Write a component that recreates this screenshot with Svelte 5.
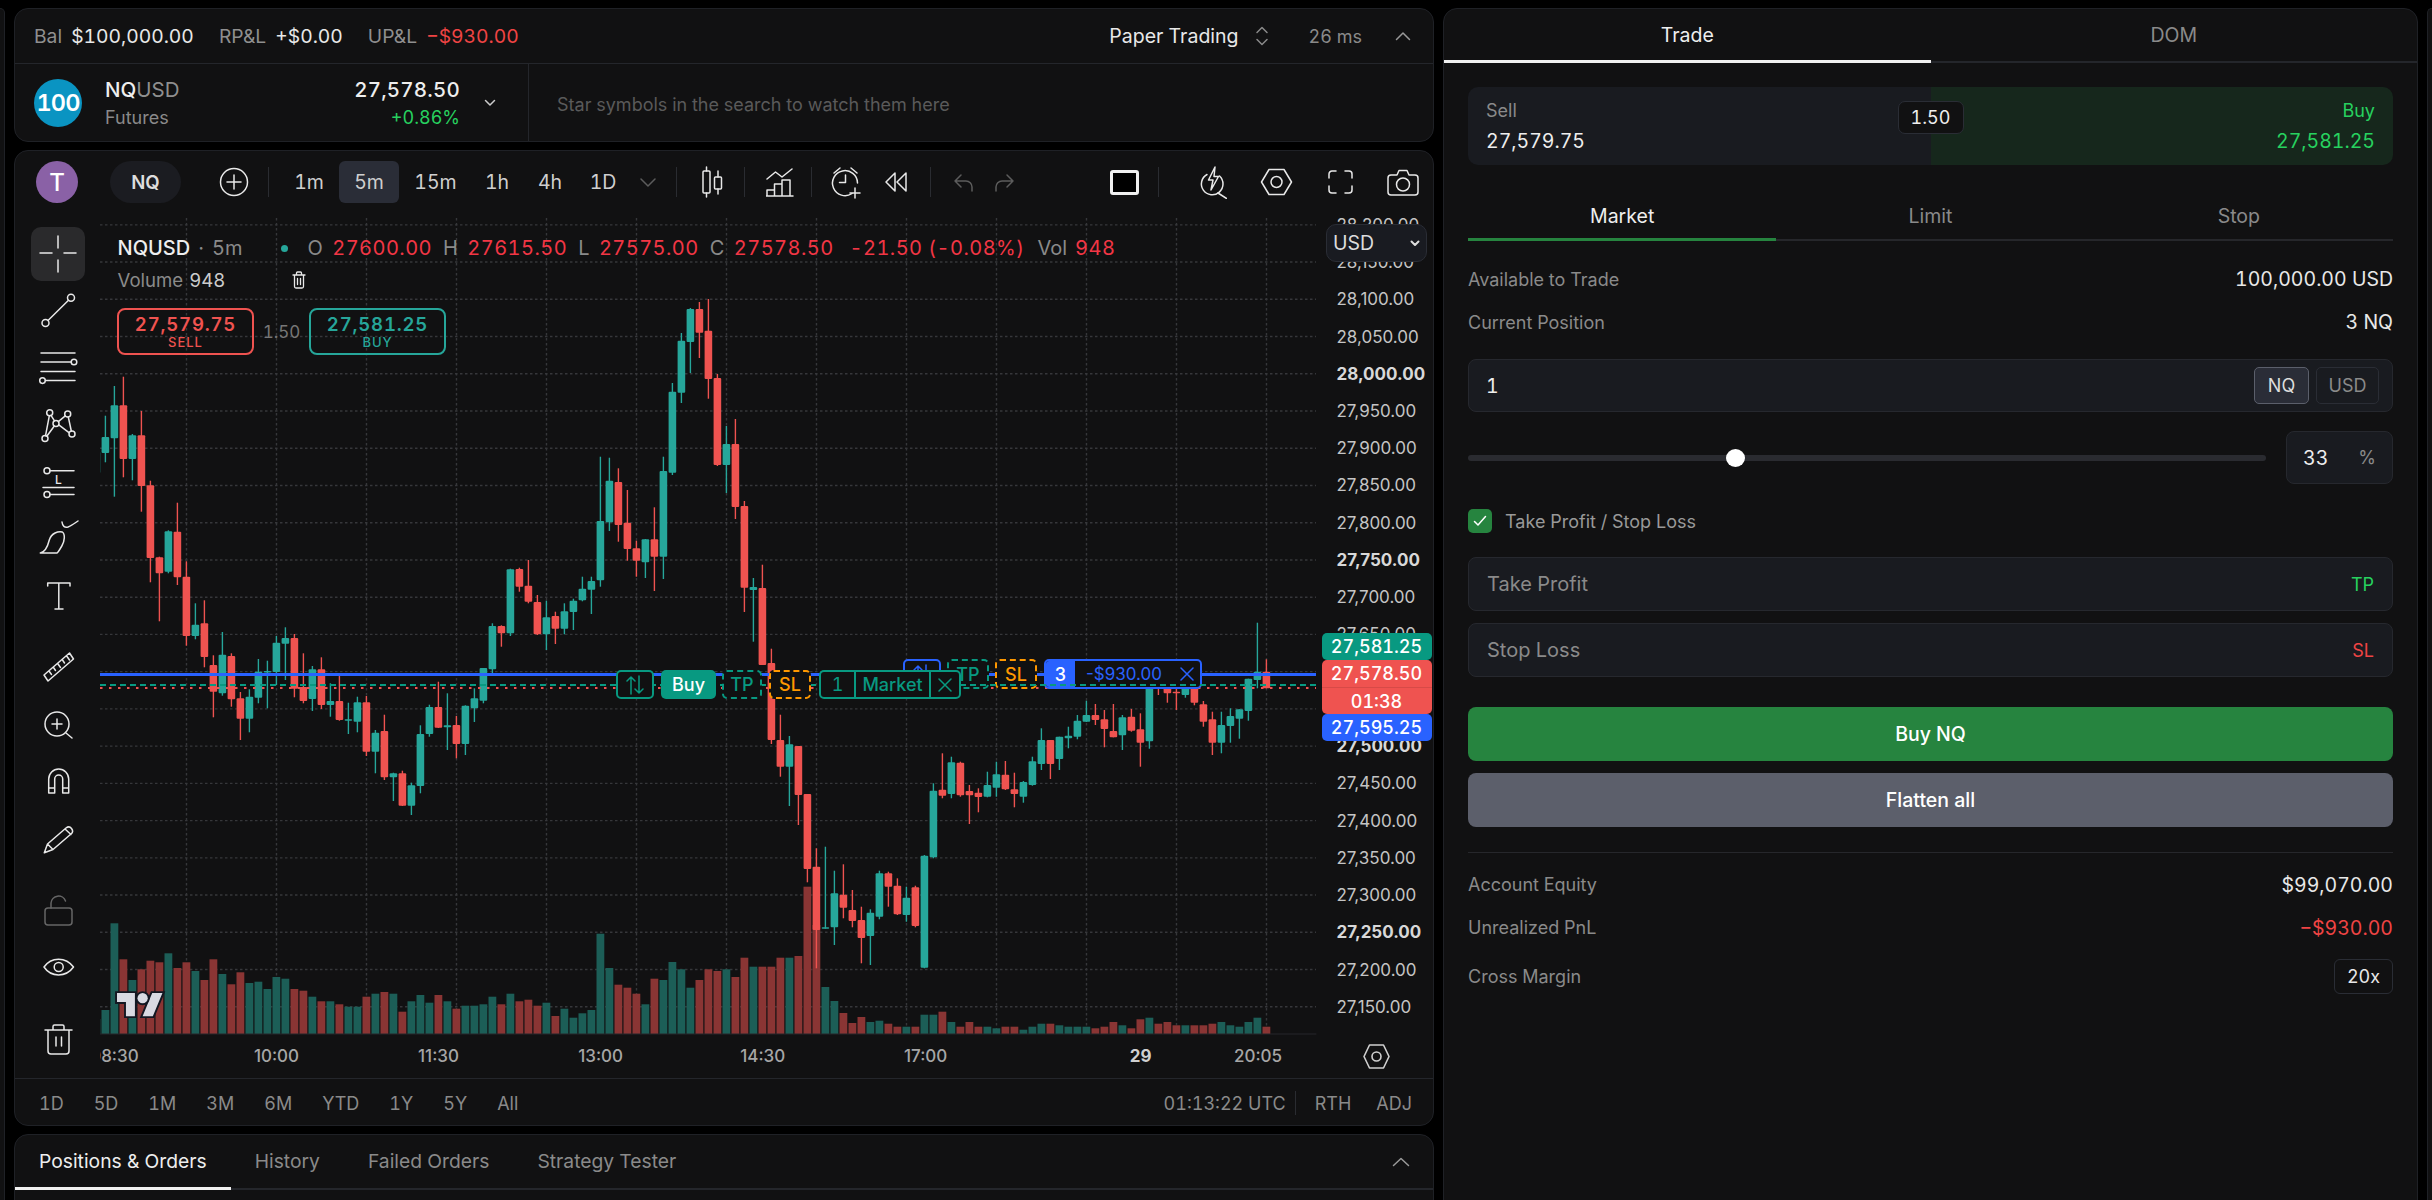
<script>
  // [up, wickTop, bodyTop, bodyBottom, wickBottom] in chart pixels; index 0 is the clipped candle at the left edge
  const candles = [
    [1,452,452,473,473],[1,415.7,437,453,462.3],[1,386,405.3,438.3,496.7],[0,376.7,405.3,459,477.3],[1,434,435.3,459,480.3],[0,411,435.3,486,511.7],
    [0,480.7,485.3,558,582.3],[0,556.7,557.3,573.3,621.3],[1,530.3,531.3,571.7,573.3],[0,502.7,531.7,577.3,585],[0,561.3,576.7,636,645.7],
    [1,603.3,624.7,636,639.3],[0,600.3,623.3,657,667.3],[0,655.3,665,691.7,717.3],[1,632,654.7,693.3,695.7],[0,653.3,656,699.3,706.7],
    [0,692,698.3,718.7,740],[1,689.3,696.7,718.7,732.3],[1,659,671.7,697.7,703.3],[1,660.7,671,672,708.3],[1,636,642.7,672,685],
    [1,627.3,638,643.7,680],[0,634,638,688.7,697.3],[0,653.3,687,701,703.3],[1,666,669.3,699,711],[0,657.3,669.3,705,709],
    [1,683.3,701,705,716.7],[0,676,701,720,720.7],[1,702.7,719.3,720.3,734],[1,696.7,702.3,721.7,732.3],[0,696,702.3,751.7,756],
    [1,730,732.7,751.7,773.3],[0,714.7,731,777.3,780],[1,772.7,773.3,777.3,801],[0,770.7,773.3,805.7,806],[1,782.7,785.3,805.7,815],
    [1,725.3,734,786,793.3],[1,704.7,707,734,736.7],[0,681.7,707,727.7,728],[1,693.3,725.3,727.3,750],[0,716,725,744,758.3],
    [1,705.3,705.7,744,755],[1,688.3,698.3,708.3,722],[1,668,668,700.7,703.3],[1,623.3,626,669.3,673.3],[0,625.3,626,633.3,646.7],
    [1,568.7,569.3,633.3,636],[0,567.7,569,586.7,591.7],[0,560,585.7,601.7,603.3],[0,595,602,634.3,635],[1,600.7,617.3,634.3,650],
    [0,611.7,616,628.7,644],[1,603.3,611.3,628.7,634.3],[1,598.7,600.7,612,630],[1,576.7,588.7,600.3,601.3],[1,576.7,581,589.7,614],
    [1,456.7,521,580.3,586.7],[1,457.7,480.7,522.3,531],[0,468.3,482,525,541.7],[0,490,522.7,549,560.7],[0,540.7,548.3,560.7,576.7],
    [1,539,539.3,562.3,578],[0,507.3,539.3,556.7,591],[1,456.7,471,556.7,579],[1,383,391.7,472.7,475],[1,333,340.7,392.7,403],
    [1,308,309,342,373],[0,302,309,332.7,358],[0,299,330.7,379,398.7],[0,374,378,465,466],[1,426,444,465,493],
    [0,419,444,507,519],[0,501,506,587.7,612],[1,578,587,590,641.7],[0,564.7,588,665,665],[0,648.7,663,740,744],
    [0,714.7,740,766.7,776.7],[1,736,744.3,766.7,806],[0,746,746,795,825],[0,794,794,869,882.3],[0,848.3,866.7,930,968.3],
    [1,846.7,927.3,928.7,928.7],[1,870.7,893.3,927.3,945],[0,864.3,894.7,907.7,918.3],[0,890,910,921,927.3],[0,906.7,920,938,963.3],
    [1,909.3,912.7,936,965],[1,870.7,873.3,916.7,919.3],[0,871.7,873.3,886.7,906.7],[0,878.3,885.7,914.3,915],[1,886.7,897.7,915,921.7],
    [0,885.7,887.3,926,927.3],[1,855,855.7,967.7,968.3],[1,783.3,790.7,857.3,858.3],[0,753.3,789.7,795.7,798.3],[1,756.7,762.3,794,798.3],
    [0,761.7,762.7,795.3,796.7],[0,785,791,795.3,824],[0,788.3,792.7,797,812.3],[1,771.7,785,796.7,797.3],[1,761.7,774.3,787.7,796.7],
    [0,761,774.7,789.3,790],[0,772.7,789.3,794,807.3],[1,781,782,796.7,802.7],[1,756.7,761.3,785,785.7],[1,728.3,740,764,770],
    [0,740,740,764,779],[1,736.7,736.7,759,770],[1,726.7,735.7,738.3,748.3],[1,715,720.7,736.7,739.3],[1,700.7,715,721.7,722],
    [0,704,715,720,725],[0,710,719.3,729,747.3],[0,704,731,737.3,737.3],[1,715,717.3,735.3,750],[0,709,716.7,730.7,731.7],
    [0,713.3,729.3,742.7,766.7],[1,676.7,680,741.3,748.7],[0,660,676.7,688.3,695],[0,683.3,688.3,693.3,702.7],[0,686.7,691.7,693.3,710],
    [1,683.3,688.3,695,697.7],[0,683.3,688.3,702.7,705.3],[0,701,704.3,721.7,726.7],[0,711.7,719.3,742.7,755],[1,711.7,725,742.7,753.3],
    [1,708.3,716,726,742.7],[1,709.3,709.3,718.7,738.7],[1,678.7,678.7,711,720.7],[1,622.7,671.7,680,688.3],[0,659.3,671.7,688.3,688.3]
  ];

  // top of each volume bar, same order as candles
  const volumes = [
    1019,1010,923.3,959.3,980,969.3,960.7,962.3,953.3,968,962.3,971,980,959.3,974,984.3,972.3,983,981.7,989,977,978.7,989,990.7,
    996.7,1001.3,1001.3,1004.3,1006.7,1006.7,996.7,993.7,992,993.7,1011.7,1001.3,995,1002.7,995,1001.3,1008.7,1005.7,1005.7,1004.3,
    996.7,1004.3,993.7,1001.3,999.7,1005.7,1002.7,1016,1008.7,1017.7,1013.3,1010,933.7,968,984.7,987.7,993.7,1004.3,978.7,980,962,
    969.3,987.7,980,969.3,971,969.3,977,957.7,966.7,966.7,966.7,957.7,957.7,956,886.7,925,987,1001,1013,1023,1017,1022,1020.7,1023.7,
    1026.7,1026.7,1026.7,1014.7,1014.7,1011.7,1022,1026.7,1022,1026.7,1026.7,1028.3,1026.7,1026.7,1029.7,1026.7,1023.7,1023.7,1025.3,
    1026.7,1026.7,1026.7,1028.3,1026.7,1022,1025.3,1028.3,1019.3,1017.7,1023.7,1022,1025.3,1025.3,1025.3,1025.3,1023.7,1022,1025.3,
    1026.7,1022,1017.7,1026.7
  ];

  const candleX = (i) => 96.4 + 9 * i;

  const gridX = [];
  for (let x = 186.5; x < 1300; x += 90) gridX.push(x);

  const prices = [];
  for (let p = 28200; p >= 27150; p -= 50) {
    prices.push({
      y: 299.3 + (28100 - p) * 0.7447,
      text: p.toLocaleString("en-US") + ".00",
      bold: p % 250 === 0
    });
  }

  const times = [
    { x: 114.4, t: "08:30" },
    { x: 276.5, t: "10:00" },
    { x: 438.5, t: "11:30" },
    { x: 600.6, t: "13:00" },
    { x: 762.7, t: "14:30" },
    { x: 925.6, t: "17:00" },
    { x: 1140.6, t: "29", bold: true },
    { x: 1258, t: "20:05" }
  ];

  const frames = [
    { t: "1m", w: 54 },
    { t: "5m", w: 60 },
    { t: "15m", w: 67 },
    { t: "1h", w: 50 },
    { t: "4h", w: 50 },
    { t: "1D", w: 50 }
  ];
  const ranges = ["1D", "5D", "1M", "3M", "6M", "YTD", "1Y", "5Y", "All"];
  const bottomTabs = ["Positions & Orders", "History", "Failed Orders", "Strategy Tester"];
</script>

<div class="page">
  <div class="sliver left"></div>

  <div class="main">
    <section class="panel top">
      <div class="stats">
        <span class="label">Bal</span><span class="val">$100,000.00</span>
        <span class="label gap">RP&amp;L</span><span class="val">+$0.00</span>
        <span class="label gap">UP&amp;L</span><span class="val neg">−$930.00</span>
        <span class="mode">Paper Trading</span>
        <svg class="updown" width="14" height="20" viewBox="0 0 14 20"><path d="M2 6.500 7 1.500l5 5M2 13.500l5 5 5-5" /></svg>
        <span class="ping">26 ms</span>
        <svg class="collapse" width="16" height="10" viewBox="0 0 16 10"><path d="M1.500 8.500 8 2l6.500 6.500" /></svg>
      </div>
      <div class="ticker">
        <div class="symbol">
          <div class="logo">100</div>
          <div class="names">
            <div class="sym">NQ<span>USD</span></div>
            <div class="kind">Futures</div>
          </div>
          <div class="quote">
            <div class="last">27,578.50</div>
            <div class="chg">+0.86%</div>
          </div>
          <svg class="caret" width="12" height="8" viewBox="0 0 12 8"><path d="M1.500 1.500 6 6l4.500-4.500" /></svg>
        </div>
        <div class="hint">Star symbols in the search to watch them here</div>
      </div>
    </section>

    <section class="panel chart">
      <div class="toolbar">
        <div class="avatar">T</div>
        <div class="pill">NQ</div>
        <svg class="ic plus" width="30" height="30" viewBox="0 0 30 30"><circle cx="15" cy="15" r="13.500" /><path d="M15 8v14M8 15h14" /></svg>
        <div class="sep s20"></div>
        <div class="frames">
          {#each frames as f}
            <div class="frame" class:on={f.t === "5m"} style="width: {f.w}px">{f.t}</div>
          {/each}
        </div>
        <svg class="ic dim more" width="20" height="10" viewBox="0 0 20 10"><path d="M3 2l7 7 7-7" /></svg>
        <div class="sep s18"></div>
        <svg class="ic m24" width="30" height="32" viewBox="0 0 30 32">
          <path d="M5.500 1v4M5.500 27v4M17 5v6M17 23v5" />
          <rect x="2" y="5" width="7" height="22" rx="1" />
          <rect x="13.500" y="11" width="7" height="12" rx="1" />
        </svg>
        <div class="sep m13"></div>
        <svg class="ic m21" width="28" height="30" viewBox="0 0 28 30">
          <path d="M1 12l8.500-7 6.500 5 10-8" />
          <path d="M1 29V23h7.500v6M8.500 29V17H16v12M16 29V13h8v16M0 29h27" />
        </svg>
        <div class="sep m17"></div>
        <svg class="ic m18" width="32" height="34" viewBox="0 0 32 34">
          <path d="M22 28.500A12.500 12.500 0 1 1 27.500 18" />
          <path d="M15.500 10v7.500H9.500M4 8l6-5M27 8l-6-5M25 23v10M20 28h10" />
        </svg>
        <svg class="ic m22" width="24" height="20" viewBox="0 0 24 20"><path d="M11 1 2 10l9 9zM22 1l-9 9 9 9z" /></svg>
        <div class="sep m22"></div>
        <svg class="ic dim m22" width="20" height="20" viewBox="0 0 20 20"><path d="M8 3 2 9l6 6M2 9h11a6 6 0 0 1 6 6v4" /></svg>
        <svg class="ic dim m22" width="20" height="20" viewBox="0 0 20 20"><path d="M12 3l6 6-6 6M18 9H7a6 6 0 0 0-6 6v4" /></svg>

        <div class="right-tools">
          <div class="square"></div>
          <div class="sep m19"></div>
          <svg class="ic m40" width="28" height="33" viewBox="0 0 28 33">
            <path d="M8 8.500A10.800 10.800 0 1 0 20.500 10" />
            <path d="M16 1 9.500 14H14l-2 10 7.500-13.500H15zM19 27l8.500 5.500" />
          </svg>
          <svg class="ic m33" width="33" height="28" viewBox="0 0 33 28">
            <path d="M9 1.500h15l7.500 12.500L24 26.500H9L1.500 14z" /><circle cx="16.500" cy="14" r="5.500" />
          </svg>
          <svg class="ic m35" width="25" height="24" viewBox="0 0 25 24">
            <path d="M1 8V4a3 3 0 0 1 3-3h4M17 1h4a3 3 0 0 1 3 3v4M24 16v4a3 3 0 0 1-3 3h-4M8 23H4a3 3 0 0 1-3-3v-4" />
          </svg>
          <svg class="ic m34" width="32" height="27" viewBox="0 0 32 27">
            <path d="M4 6h6l2-4.500h8L22 6h6a3 3 0 0 1 3 3v14a3 3 0 0 1-3 3H4a3 3 0 0 1-3-3V9a3 3 0 0 1 3-3z" /><circle cx="16" cy="15.500" r="6.500" />
          </svg>
        </div>
      </div>

      <div class="body">
        <div class="tools">
          <div class="tool active">
            <svg width="40" height="40" viewBox="0 0 40 40"><path d="M20 2v12M20 26v12M2 19h12M26 19h12" /></svg>
          </div>
          <div class="tool">
            <svg width="40" height="40" viewBox="0 0 40 40"><circle cx="7.500" cy="32" r="3.500" /><circle cx="33" cy="6.700" r="3.500" /><path d="M10 29.500 30.500 9.300" /></svg>
          </div>
          <div class="tool">
            <svg width="40" height="40" viewBox="0 0 40 40"><circle cx="36" cy="14" r="2.800" /><circle cx="4.500" cy="32.600" r="2.800" /><path d="M3 5h34M3 14h30M3 23.600h34M7.500 32.600H37" /></svg>
          </div>
          <div class="tool">
            <svg width="40" height="40" viewBox="0 0 40 40">
              <circle cx="11.700" cy="7.700" r="3" /><circle cx="29.700" cy="9" r="3" /><circle cx="18" cy="18.500" r="3" /><circle cx="7" cy="33.600" r="3" /><circle cx="34" cy="29" r="3" />
              <path d="M7.500 30.800l3.800-20M13 10.400l3.500 5.500M20.300 16.600l7-5.800M30.300 12l3 14M31.300 27.800 20.800 19.800M16.300 21 8.800 31.300" />
            </svg>
          </div>
          <div class="tool">
            <svg width="40" height="40" viewBox="0 0 40 40">
              <circle cx="9" cy="8.700" r="3" /><circle cx="9" cy="32.600" r="3" />
              <path d="M12 8.700h24M5 25.500h31M12 32.600h24" />
              <text x="17" y="21.500" class="mini">L</text>
            </svg>
          </div>
          <div class="tool">
            <svg width="40" height="40" viewBox="0 0 40 40">
              <path d="M2.300 34c5-1 7.500-7 9-13 2-7 9-9 13-8 3 2 2.500 9-.5 14-2 3.500-4 7-5 7z" />
              <path d="M24 3c.500 4 2.500 6 6 5 3-1 7-4 10-6" />
            </svg>
          </div>
          <div class="tool">
            <svg width="40" height="40" viewBox="0 0 40 40"><path d="M9.700 10V7H32v3M20.800 7v26M17 33h8" /></svg>
          </div>

          <div class="tool mt14">
            <svg width="40" height="40" viewBox="0 0 40 40"><path d="M6 28 31.500 6l4 6L10 34zM11 24l2.500 3.500M15.500 20.500l2 3M20 17l2.500 3.500M24.500 13l2 3M29 9.500l2.500 3.500" /></svg>
          </div>
          <div class="tool">
            <svg width="40" height="40" viewBox="0 0 40 40"><circle cx="19" cy="20" r="12" /><path d="M28 29l6 5M19 15v10M14 20h10" /></svg>
          </div>
          <div class="tool">
            <svg width="40" height="40" viewBox="0 0 40 40"><path d="M10.700 32V18a10 10 0 0 1 20 0v14H24.700V18a4 4 0 0 0-8 0v14zM10.700 27h6M24.700 27h6" /></svg>
          </div>
          <div class="tool">
            <svg width="40" height="40" viewBox="0 0 40 40"><path d="M6.300 34.700 9.500 26 28 10c2-1.500 4-1.500 5.500.5s1.500 4-.5 5.500L15 31.500zM9.500 26l5.500 5.500M27 11l6 5.500" /></svg>
          </div>

          <div class="tool mt15">
            <svg class="lock" width="40" height="40" viewBox="0 0 40 40"><rect x="7" y="18" width="27" height="17" rx="3" /><path d="M13 18v-5a7.500 7.500 0 0 1 14.500-2" /></svg>
          </div>
          <div class="tool">
            <svg width="40" height="40" viewBox="0 0 40 40"><path d="M6 20c7-10.500 22-10.500 29.500 0-7.500 10.500-22.500 10.500-29.500 0z" /><circle cx="20.700" cy="20" r="4.500" /></svg>
          </div>
          <div class="tool mt14">
            <svg width="40" height="40" viewBox="0 0 40 40"><path d="M7 12h27M15 12V8.500A1.500 1.500 0 0 1 16.500 7h8A1.500 1.500 0 0 1 26 8.500V12M10 12v21a3 3 0 0 0 3 3h15a3 3 0 0 0 3-3V12M18 19v9M23.500 19v9" /></svg>
          </div>
        </div>

        <div class="plot">
          <svg class="canvas" width="1334" height="860" viewBox="100 218 1334 860">
            <defs>
              <clipPath id="pane"><rect x="100" y="218" width="1216" height="860" /></clipPath>
            </defs>

            {#each prices as p}
              <line class="grid" x1="100" x2="1316" y1={p.y} y2={p.y} />
            {/each}
            {#each gridX as x}
              <line class="grid" x1={x} x2={x} y1="218" y2="1034" />
            {/each}

            <g clip-path="url(#pane)">
              {#each volumes as top, i}
                <rect class={candles[i][0] ? "vol-up" : "vol-down"} x={candleX(i) - 3.9} y={top} width="7.800" height={1034 - top} />
              {/each}
              {#each candles as c, i}
                <line class={c[0] ? "wick-up" : "wick-down"} x1={candleX(i)} x2={candleX(i)} y1={c[1]} y2={c[4]} />
                <rect class={c[0] ? "up" : "down"} x={candleX(i) - 3.8} y={c[2]} width="7.600" height={Math.max(c[3] - c[2], 1.500)} rx="1" />
              {/each}
            </g>

            <line class="base" x1="100" x2="1316" y1="1034" y2="1034" />
            <line class="pos-line" x1="100" x2="1316" y1="674.500" y2="674.500" />
            <line class="last-line" x1="100" x2="1316" y1="688" y2="688" />

            {#each prices as p}
              <text class="price" class:bold={p.bold} x="1336.500" y={p.y + 6}>{p.text}</text>
            {/each}
            <g clip-path="url(#pane)">
              {#each times as t}
                <text class="time" class:bold={t.bold} x={t.x} y="1062">{t.t}</text>
              {/each}
            </g>

            <g class="tv" transform="translate(117 988) scale(1.28)">
              <path d="M14 22H7V11H0V4h14v18zM28 22h-8l7.500-18h8L28 22z" /><circle cx="20" cy="8" r="4" />
            </g>

            <g class="gear" transform="translate(1376.500 1056.500)">
              <path d="M-7-11.500H7L12.500 0 7 11.500H-7L-12.500 0z" /><circle r="4.500" />
            </g>
          </svg>

          <div class="legend">
            <div class="line">
              <span class="name">NQUSD</span><span class="mut dotsep">·</span><span class="mut">5m</span>
              <span class="status"></span>
              <span class="mut k">O</span><span class="red">27600.00</span>
              <span class="mut k">H</span><span class="red">27615.50</span>
              <span class="mut k">L</span><span class="red">27575.00</span>
              <span class="mut k">C</span><span class="red">27578.50</span>
              <span class="red chg2">-21.50 (-0.08%)</span>
              <span class="mut vol">Vol</span><span class="red">948</span>
            </div>
            <div class="line second">
              <span class="mut">Volume</span><span class="vnum">948</span>
              <svg class="bin" width="14" height="18" viewBox="0 0 14 18"><path d="M1 4h12M4.500 4V2a1 1 0 0 1 1-1h3a1 1 0 0 1 1 1v2M2.500 4v11.500a1.500 1.500 0 0 0 1.500 1.500h6a1.500 1.500 0 0 0 1.500-1.500V4M5.500 7.500v6M8.500 7.500v6" /></svg>
            </div>
          </div>

          <div class="quick">
            <div class="qbtn sell"><b>27,579.75</b><small>SELL</small></div>
            <span class="spread">1.50</span>
            <div class="qbtn buy"><b>27,581.25</b><small>BUY</small></div>
          </div>

          <div class="currency">USD <svg width="10" height="7" viewBox="0 0 10 7"><path d="M1.500 1.500 5 5l3.500-3.500" /></svg></div>

          <!-- position group behind the order group -->
          <div class="trade-row upper">
            <div class="chip flip blue"><svg width="18" height="22" viewBox="0 0 18 22"><path d="M5 20V3M1 7l4-4 4 4M13 2v17M9 15l4 4 4-4" /></svg></div>
            <div class="chip dash teal">TP</div>
            <div class="chip dash amber">SL</div>
            <div class="position">
              <span class="qty">3</span><span class="pnl">-$930.00</span>
              <svg width="14" height="14" viewBox="0 0 14 14"><path d="M1 1l12 12M13 1 1 13" /></svg>
            </div>
          </div>
          <div class="order-line"></div>
          <div class="trade-row lower">
            <div class="chip flip green"><svg width="18" height="22" viewBox="0 0 18 22"><path d="M5 20V3M1 7l4-4 4 4M13 2v17M9 15l4 4 4-4" /></svg></div>
            <div class="chip buy-chip">Buy</div>
            <div class="chip dash teal tp-low">TP</div>
            <div class="chip dash amber sl-low">SL</div>
            <div class="order">
              <span class="c1">1</span><span class="c2">Market</span>
              <span class="c3"><svg width="14" height="14" viewBox="0 0 14 14"><path d="M1 1l12 12M13 1 1 13" /></svg></span>
            </div>
          </div>

          <div class="tags">
            <div class="tag ask">27,581.25</div>
            <div class="tag last-tag"><span>27,578.50</span><span>01:38</span></div>
            <div class="tag entry">27,595.25</div>
          </div>
        </div>
      </div>

      <div class="ranges">
        {#each ranges as r}
          <span>{r}</span>
        {/each}
        <span class="clock">01:13:22 UTC</span>
        <span class="rsep"></span>
        <span class="rth">RTH</span>
        <span class="adj">ADJ</span>
      </div>
    </section>

    <section class="panel bottom">
      <div class="btabs">
        {#each bottomTabs as t, i}
          <div class="btab" class:on={i === 0}>{t}</div>
        {/each}
        <svg class="collapse2" width="18" height="10" viewBox="0 0 18 10"><path d="M1.500 8.500 9 1.500l7.500 7" /></svg>
      </div>
    </section>
  </div>

  <section class="panel side">
    <div class="side-tabs">
      <div class="side-tab on">Trade</div>
      <div class="side-tab">DOM</div>
    </div>
    <div class="side-body">
      <div class="bidask">
        <div class="ba sell-side"><span class="ba-l">Sell</span><span class="ba-p">27,579.75</span></div>
        <div class="ba buy-side"><span class="ba-l">Buy</span><span class="ba-p">27,581.25</span></div>
        <div class="ba-spread">1.50</div>
      </div>

      <div class="otabs">
        <div class="otab on">Market</div>
        <div class="otab">Limit</div>
        <div class="otab">Stop</div>
      </div>

      <div class="rows first">
        <div class="row"><span>Available to Trade</span><b>100,000.00 USD</b></div>
        <div class="row"><span>Current Position</span><b>3 NQ</b></div>
      </div>

      <div class="field qty-field">
        <span class="fval">1</span>
        <span class="unit sel">NQ</span>
        <span class="unit usd">USD</span>
      </div>

      <div class="slider-row">
        <div class="track"><div class="thumb"></div></div>
        <div class="pct"><span>33</span><em>%</em></div>
      </div>

      <div class="check-row">
        <div class="check"><svg width="14" height="12" viewBox="0 0 14 12"><path d="M1.500 6.500 5 10l7.500-8.500" /></svg></div>
        <span>Take Profit / Stop Loss</span>
      </div>

      <div class="field tp-field"><span class="ph">Take Profit</span><span class="tag-g">TP</span></div>
      <div class="field sl-field"><span class="ph">Stop Loss</span><span class="tag-r">SL</span></div>

      <button class="cta buy-cta">Buy NQ</button>
      <button class="cta flat-cta">Flatten all</button>

      <div class="divider"></div>

      <div class="rows">
        <div class="row"><span>Account Equity</span><b>$99,070.00</b></div>
        <div class="row"><span>Unrealized PnL</span><b class="neg">−$930.00</b></div>
        <div class="row margin"><span>Cross Margin</span><b class="lev">20x</b></div>
      </div>
    </div>
  </section>

  <div class="sliver right"></div>
</div>

<style>
  :global(body) {
    margin: 0;
    background: #000;
    overflow: hidden;
  }
  * {
    box-sizing: border-box;
  }
  .page {
    width: 2432px;
    height: 1200px;
    overflow: hidden;
    display: flex;
    gap: 9px;
    padding-top: 8px;
    font-family: Inter, "Liberation Sans", sans-serif;
    font-variant-numeric: tabular-nums;
    color: #e6e6e6;
  }
  .sliver {
    width: 5px;
    height: 1300px;
    background: #111112;
    border: 1px solid #1f2126;
  }
  .sliver.left {
    border-left: 0;
    border-radius: 0 14px 14px 0;
  }
  .sliver.right {
    border-right: 0;
    border-radius: 14px 0 0 14px;
  }
  .main {
    width: 1420px;
    display: flex;
    flex-direction: column;
    gap: 8px;
  }
  .panel {
    background: #111112;
    border: 1px solid #1f2126;
    border-radius: 14px;
    overflow: hidden;
  }
  svg {
    fill: none;
    stroke: #e8e8e8;
    stroke-width: 1.5;
    stroke-linecap: round;
    stroke-linejoin: round;
    flex: none;
  }

  /* account strip */
  .top {
    height: 134px;
    flex: none;
  }
  .stats {
    height: 55px;
    border-bottom: 1px solid #24262b;
    display: flex;
    align-items: center;
    padding: 0 22px 0 19px;
    font-size: 19.3px;
  }
  .label {
    color: #8f8f8f;
    margin-right: 9px;
  }
  .label.gap {
    margin-left: 25px;
  }
  .val {
    color: #e8e8e8;
  }
  .neg {
    color: #ef4444;
  }
  .mode {
    margin-left: auto;
    color: #e8e8e8;
    font-size: 19.5px;
  }
  .updown {
    margin-left: 16px;
    stroke: #8a8a8a;
  }
  .ping {
    margin-left: 40px;
    color: #8a8a8a;
    font-size: 18px;
  }
  .collapse {
    margin-left: 33px;
    stroke: #999;
  }
  .ticker {
    height: 77px;
    display: flex;
  }
  .symbol {
    width: 514px;
    border-right: 1px solid #24262b;
    display: flex;
    align-items: center;
    padding: 0 32px 0 19px;
  }
  .logo {
    width: 48px;
    height: 48px;
    border-radius: 50%;
    background: #0a94c2;
    color: #fff;
    font-size: 23.5px;
    font-weight: 600;
    letter-spacing: -0.8px;
    display: flex;
    align-items: center;
    justify-content: center;
  }
  .names {
    margin-left: 23px;
  }
  .sym {
    font-size: 20.5px;
    font-weight: 500;
    color: #eee;
  }
  .sym span {
    color: #8f8f8f;
    font-weight: 400;
  }
  .kind {
    font-size: 18px;
    color: #8a8a8a;
    margin-top: 5px;
  }
  .quote {
    margin-left: auto;
    text-align: right;
  }
  .last {
    font-size: 20.5px;
    font-weight: 500;
    letter-spacing: 0.2px;
    color: #eee;
  }
  .chg {
    font-size: 18px;
    color: #27d15f;
    margin-top: 5px;
  }
  .caret {
    margin-left: 24px;
    stroke: #ccc;
  }
  .hint {
    padding: 4px 0 0 28px;
    align-self: center;
    font-size: 18px;
    color: #5a5a5a;
  }

  /* chart panel */
  .chart {
    height: 976px;
    flex: none;
    display: flex;
    flex-direction: column;
  }
  .toolbar {
    height: 67px;
    flex: none;
    display: flex;
    align-items: center;
    padding: 0 14px 5px 21px;
    font-size: 19.5px;
  }
  .avatar {
    width: 42px;
    height: 42px;
    border-radius: 50%;
    background: #8a61a6;
    color: #fff;
    font-size: 24px;
    font-weight: 500;
    display: flex;
    align-items: center;
    justify-content: center;
    flex: none;
  }
  .pill {
    margin-left: 32px;
    width: 71px;
    height: 42px;
    border-radius: 21px;
    background: #1b1c21;
    font-weight: 600;
    font-size: 18.6px;
    color: #ddd;
    display: flex;
    align-items: center;
    justify-content: center;
    flex: none;
  }
  .plus {
    margin-left: 38px;
  }
  .sep {
    width: 1px;
    height: 30px;
    background: #2a2c31;
    flex: none;
  }
  .s20 {
    margin-left: 19px;
  }
  .s18 {
    margin-left: 18px;
  }
  .frames {
    margin-left: 13px;
    display: flex;
    gap: 3px;
  }
  .frame {
    height: 42px;
    border-radius: 6px;
    color: #cfcfcf;
    display: flex;
    align-items: center;
    justify-content: center;
  }
  .frame.on {
    background: #2a2d37;
  }
  .more {
    margin-left: 10px;
  }
  .ic.dim {
    stroke: #5c5c5c;
  }
  .m13 { margin-left: 13px; }
  .m17 { margin-left: 17px; }
  .m18 { margin-left: 18px; }
  .m19 { margin-left: 19px; }
  .m21 { margin-left: 21px; }
  .m22 { margin-left: 22px; }
  .m24 { margin-left: 24px; }
  .m33 { margin-left: 33px; }
  .m34 { margin-left: 34px; }
  .m35 { margin-left: 35px; }
  .m40 { margin-left: 40px; }
  .right-tools {
    margin-left: auto;
    display: flex;
    align-items: center;
  }
  .square {
    width: 29px;
    height: 25px;
    background: #000;
    border: 3px solid #f0f0f0;
    border-radius: 3px;
  }
  .body {
    height: 860px;
    flex: none;
    display: flex;
  }
  .tools {
    width: 85px;
    flex: none;
    padding-top: 7.5px;
  }
  .tool {
    height: 57px;
    display: flex;
    align-items: center;
    justify-content: center;
  }
  .tool svg {
    overflow: visible;
  }
  .tool.active::before {
    content: "";
    position: absolute;
    width: 54px;
    height: 54px;
    background: #2a2a2c;
    border-radius: 10px;
  }
  .tool.active svg {
    position: relative;
  }
  .mt14 { margin-top: 14px; }
  .mt15 { margin-top: 15px; }
  .mini {
    font: 500 12px Inter, sans-serif;
    fill: #e8e8e8;
    stroke: none;
  }
  .lock {
    stroke: #666;
  }

  .plot {
    position: relative;
    width: 1334px;
    height: 860px;
    flex: none;
    overflow: hidden;
  }
  .canvas {
    display: block;
    stroke: none;
    stroke-width: 1;
    font-variant-numeric: normal;
  }
  .grid {
    stroke: #36373a;
    stroke-width: 1.4;
    stroke-dasharray: 2.5 2.5;
    stroke-linecap: butt;
  }
  .base {
    stroke: #26272b;
  }
  .vol-up {
    fill: #1c5e57;
  }
  .vol-down {
    fill: #8a3534;
  }
  .up {
    fill: #26a69a;
  }
  .down {
    fill: #ef5350;
  }
  .wick-up {
    stroke: #26a69a;
    stroke-width: 1.4;
    stroke-linecap: butt;
  }
  .wick-down {
    stroke: #ef5350;
    stroke-width: 1.4;
    stroke-linecap: butt;
  }
  .pos-line {
    stroke: #2962ff;
    stroke-width: 3;
    stroke-linecap: butt;
  }
  .last-line {
    stroke: #ef5350;
    stroke-width: 2;
    stroke-linecap: butt;
    stroke-dasharray: 2.5 6.5;
  }
  .price {
    font-size: 17px;
    fill: #c4c4c4;
    stroke: none;
  }
  .price.bold {
    font-weight: 700;
    fill: #d8d8d8;
  }
  .time {
    font-size: 17px;
    font-weight: 500;
    fill: #a6a6a6;
    stroke: none;
    text-anchor: middle;
  }
  .time.bold {
    font-weight: 700;
    fill: #d0d0d0;
  }
  .tv {
    fill: #d9dae2;
    stroke: #131722;
    stroke-width: 3;
    paint-order: stroke;
    stroke-linejoin: miter;
  }
  .gear {
    stroke: #d0d0d0;
    stroke-width: 1.6;
    fill: none;
  }

  .legend {
    position: absolute;
    left: 17.5px;
    top: 17px;
    font-size: 20px;
  }
  .line {
    display: flex;
    align-items: center;
    height: 26px;
    white-space: nowrap;
  }
  .name {
    color: #eee;
    font-weight: 500;
  }
  .mut {
    color: #8a8a8a;
  }
  .dotsep {
    margin: 0 8px;
  }
  .status {
    width: 7px;
    height: 7px;
    border-radius: 50%;
    background: #26a69a;
    margin: 0 19px 0 39px;
  }
  .red {
    color: #f23645;
    letter-spacing: 0.45px;
  }
  .k {
    margin-right: 9.5px;
  }
  .red + .k {
    margin-left: 11px;
  }
  .chg2 {
    margin-left: 16px;
  }
  .vol {
    margin: 0 8px 0 13px;
  }
  .second {
    margin-top: 6px;
    font-size: 18.6px;
  }
  .vnum {
    color: #ccc;
    margin-left: 6px;
  }
  .bin {
    margin-left: 67px;
    stroke-width: 1.3;
  }
  .quick {
    position: absolute;
    left: 17px;
    top: 90px;
    display: flex;
    align-items: center;
  }
  .qbtn {
    width: 137px;
    height: 47px;
    border: 2px solid;
    border-radius: 8px;
    display: flex;
    flex-direction: column;
    align-items: center;
    justify-content: center;
  }
  .qbtn b {
    font-size: 18.6px;
    font-weight: 600;
    letter-spacing: 0.8px;
    line-height: 22px;
  }
  .qbtn small {
    font-size: 13px;
    font-weight: 500;
    letter-spacing: 1px;
    line-height: 15px;
  }
  .qbtn.sell {
    border-color: #ef5350;
    color: #ef5350;
  }
  .qbtn.buy {
    border-color: #26a69a;
    color: #26a69a;
  }
  .spread {
    width: 55px;
    text-align: center;
    font-size: 17px;
    color: #777;
  }
  .currency {
    position: absolute;
    left: 1226px;
    top: 6px;
    width: 101px;
    height: 38px;
    padding-left: 6px;
    border: 1.5px solid #2a2d35;
    border-radius: 10px;
    background: #191b21;
    font-size: 19.5px;
    color: #ddd;
    display: flex;
    align-items: center;
    justify-content: space-between;
    padding-right: 6px;
  }
  .currency svg {
    stroke: #ddd;
    stroke-width: 2;
  }

  .trade-row {
    position: absolute;
    display: flex;
    font-size: 18px;
    font-weight: 500;
  }
  .upper {
    left: 803px;
    top: 441px;
    height: 30px;
  }
  .lower {
    left: 516px;
    top: 452px;
    height: 29px;
  }
  .chip {
    height: 100%;
    border-radius: 5px;
    display: flex;
    align-items: center;
    justify-content: center;
    background: #111112;
    flex: none;
  }
  .flip {
    width: 38px;
    border: 2px solid;
  }
  .flip.blue {
    border-color: #2962ff;
  }
  .flip.blue svg {
    stroke: #2962ff;
  }
  .flip.green {
    border-color: #089981;
  }
  .flip.green svg {
    stroke: #089981;
  }
  .dash {
    border: 2px dashed;
    margin-left: 6px;
    width: 42px;
  }
  .teal {
    color: #089981;
    border-color: #089981;
  }
  .amber {
    color: #ff9800;
    border-color: #ff9800;
  }
  .buy-chip {
    margin-left: 7px;
    width: 55px;
    background: #089981;
    color: #fff;
  }
  .tp-low {
    width: 40px;
  }
  .sl-low {
    margin-left: 7px;
    background: #111112;
  }
  .position {
    margin-left: 7px;
    width: 158px;
    border: 2px solid #2962ff;
    border-radius: 5px;
    background: #111112;
    display: flex;
    align-items: center;
    color: #2962ff;
    overflow: hidden;
  }
  .position svg {
    stroke: #2962ff;
    margin-left: 18px;
  }
  .qty {
    width: 29px;
    align-self: stretch;
    background: #2962ff;
    color: #fff;
    display: flex;
    align-items: center;
    justify-content: center;
  }
  .pnl {
    margin-left: 11px;
    font-weight: 400;
    font-size: 17px;
    font-variant-numeric: normal;
  }
  .order-line {
    position: absolute;
    left: 0;
    width: 1216px;
    top: 465.500px;
    border-top: 2px dashed #089981;
  }
  .order {
    margin-left: 8px;
    width: 142px;
    border: 2px solid #089981;
    border-radius: 5px;
    background: #111112;
    color: #089981;
    display: flex;
    align-items: stretch;
    font-weight: 400;
  }
  .order span {
    display: flex;
    align-items: center;
    justify-content: center;
  }
  .c1 {
    width: 35px;
    border-right: 2px solid #089981;
  }
  .c2 {
    width: 75px;
    border-right: 2px solid #089981;
    font-weight: 500;
  }
  .c3 {
    flex: 1;
  }
  .c3 svg {
    stroke: #089981;
  }
  .tags {
    position: absolute;
    left: 1221.500px;
    top: 414.500px;
    width: 110px;
    color: #fff;
    font-size: 18px;
    font-weight: 500;
    text-align: center;
  }
  .tag {
    border-radius: 5px;
    height: 27px;
    line-height: 27px;
  }
  .ask {
    background: #089981;
  }
  .last-tag {
    height: 54px;
    background: #ef5350;
    line-height: 27px;
    display: flex;
    flex-direction: column;
  }
  .last-tag span:first-child {
    border-bottom: 1px solid #d74a47;
  }
  .entry {
    background: #2962ff;
  }

  .ranges {
    height: 47px;
    flex: none;
    border-top: 1px solid #24262b;
    display: flex;
    align-items: center;
    gap: 30px;
    padding: 2px 21px 0 24px;
    font-size: 18px;
    color: #8a8a8a;
  }
  .clock {
    margin-left: auto;
  }
  .rsep {
    width: 1px;
    height: 24px;
    background: #2a2c31;
    margin: 0 -11px 0 -21px;
  }
  .adj {
    margin-left: -5px;
  }

  .bottom {
    height: 120px;
    flex: none;
  }
  .btabs {
    height: 55px;
    border-bottom: 2px solid #24262b;
    display: flex;
    padding-right: 23px;
    align-items: stretch;
    font-size: 19.3px;
  }
  .btab {
    padding: 0 24px;
    color: #8a8a8a;
    display: flex;
    align-items: center;
    margin-bottom: -2px;
    border-bottom: 3px solid transparent;
  }
  .btab.on {
    color: #eee;
    border-bottom-color: #f0f0f0;
  }
  .collapse2 {
    margin-left: auto;
    align-self: center;
    stroke: #999;
  }

  /* order ticket */
  .side {
    width: 975px;
    flex: none;
    height: 1300px;
  }
  .side-tabs {
    display: flex;
    height: 54px;
  }
  .side-tab {
    flex: 1;
    border-bottom: 2px solid #24262b;
    color: #8a8a8a;
    font-size: 19.5px;
    display: flex;
    align-items: center;
    justify-content: center;
  }
  .side-tab.on {
    color: #eee;
    border-bottom: 3px solid #f0f0f0;
  }
  .side-body {
    padding: 24px 24px 0;
  }
  .bidask {
    position: relative;
    height: 78px;
    border-radius: 10px;
    overflow: hidden;
    display: flex;
  }
  .ba {
    flex: 1;
    display: flex;
    flex-direction: column;
    justify-content: center;
    gap: 9px;
    padding: 0 18px;
  }
  .sell-side {
    background: #191b20;
  }
  .buy-side {
    background: #16271c;
    align-items: flex-end;
  }
  .ba-l {
    font-size: 18px;
    line-height: 20px;
    color: #8a8a8a;
  }
  .buy-side .ba-l,
  .buy-side .ba-p {
    color: #27d15f;
  }
  .ba-p {
    font-size: 19.5px;
    line-height: 22px;
    color: #eee;
  }
  .ba-spread {
    position: absolute;
    left: 50%;
    top: 14px;
    transform: translateX(-50%);
    width: 66px;
    height: 33px;
    background: #111112;
    border: 1.5px solid #2a2d35;
    border-radius: 7px;
    font-size: 18px;
    color: #eee;
    display: flex;
    align-items: center;
    justify-content: center;
  }
  .otabs {
    display: flex;
    height: 52px;
    margin-top: 24px;
  }
  .otab {
    flex: 1;
    padding-top: 4px;
    border-bottom: 2px solid #26272b;
    color: #8a8a8a;
    font-size: 19.5px;
    display: flex;
    align-items: center;
    justify-content: center;
  }
  .otab.on {
    color: #eee;
    border-bottom: 3px solid #26843f;
  }
  .rows.first {
    margin-top: 16px;
  }
  .rows {
    margin-top: 9.500px;
  }
  .row {
    height: 43px;
    padding-top: 1px;
    display: flex;
    align-items: center;
    justify-content: space-between;
    font-size: 18px;
    color: #8a8a8a;
  }
  .row b {
    font-weight: 400;
    font-size: 19.5px;
    color: #e8e8e8;
  }
  .row b.neg {
    color: #ef4444;
  }
  .row.margin {
    height: 35px;
    margin-top: 9.500px;
  }
  .row b.lev {
    font-size: 18px;
    width: 59px;
    height: 35px;
    border: 1.5px solid #2a2d35;
    border-radius: 6px;
    display: flex;
    align-items: center;
    justify-content: center;
  }
  .field {
    height: 53.500px;
    background: #191b20;
    border: 1.5px solid #26282e;
    border-radius: 8px;
    display: flex;
    align-items: center;
    padding: 1px 18px 0;
  }
  .qty-field {
    height: 53px;
    margin-top: 16px;
    padding: 0 13px 0 17px;
    gap: 7px;
  }
  .fval {
    margin-right: auto;
    font-size: 19.5px;
    color: #eee;
  }
  .unit {
    width: 63px;
    height: 37px;
    border: 1.5px solid #2a2d35;
    border-radius: 5px;
    color: #8a8a8a;
    font-size: 18px;
    display: flex;
    align-items: center;
    justify-content: center;
  }
  .unit.sel {
    width: 55px;
    background: #2a2d37;
    border-color: #5b5f6b;
    color: #ddd;
  }
  .slider-row {
    margin-top: 19px;
    height: 53px;
    display: flex;
    align-items: center;
    gap: 20px;
  }
  .track {
    position: relative;
    flex: 1;
    height: 6px;
    border-radius: 3px;
    background: #2a2b30;
  }
  .thumb {
    position: absolute;
    left: 258px;
    top: -6px;
    width: 19px;
    height: 18px;
    border-radius: 50%;
    background: #fff;
  }
  .pct {
    width: 107px;
    height: 53px;
    background: #191b20;
    border: 1.5px solid #26282e;
    border-radius: 8px;
    display: flex;
    align-items: center;
    justify-content: space-between;
    padding: 0 16px;
    font-size: 19.5px;
    color: #eee;
  }
  .pct em {
    font-style: normal;
    font-size: 18px;
    color: #8a8a8a;
  }
  .check-row {
    margin-top: 25px;
    height: 24px;
    display: flex;
    align-items: center;
    gap: 13px;
    font-size: 18px;
    color: #999;
  }
  .check {
    width: 24px;
    height: 24px;
    border-radius: 5px;
    background: #26843f;
    display: flex;
    align-items: center;
    justify-content: center;
  }
  .check svg {
    stroke: #fff;
  }
  .tp-field {
    margin-top: 24px;
    justify-content: space-between;
  }
  .sl-field {
    margin-top: 12.500px;
    justify-content: space-between;
  }
  .ph {
    font-size: 20px;
    color: #8a8a8a;
  }
  .tag-g {
    font-size: 18px;
    color: #27d15f;
  }
  .tag-r {
    font-size: 18px;
    color: #ef4444;
  }
  .cta {
    display: block;
    width: 100%;
    height: 53.500px;
    border: 0;
    border-radius: 8px;
    padding: 1px 0 0;
    color: #fff;
    font: 500 19.5px Inter, sans-serif;
  }
  .buy-cta {
    margin-top: 30.500px;
    background: #26843f;
  }
  .flat-cta {
    margin-top: 12.500px;
    background: #5c5f6b;
  }
  .divider {
    margin-top: 25.500px;
    height: 1px;
    background: #26272b;
  }
</style>
